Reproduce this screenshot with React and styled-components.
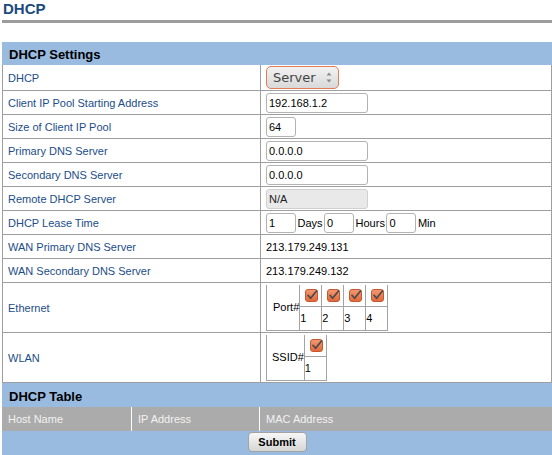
import React from 'react';
import styled, { createGlobalStyle } from 'styled-components';

const GlobalStyle = createGlobalStyle`
  html, body { margin: 0; padding: 0; background: #fff; }
  body {
    font-family: "Liberation Sans", Arial, sans-serif;
    font-size: 11px;
    color: #000;
  }
`;

const Page = styled.div`
  width: 550px;
  padding-left: 2px;
`;

const Title = styled.h1`
  margin: 0;
  font-size: 15px;
  line-height: 18px;
  font-weight: bold;
  color: #1b4a80;
  padding-bottom: 2px;
  border-bottom: 3px solid #9c9c9c;
  padding-left: 1px;
`;

const SectionHeader = styled.div`
  margin-top: ${(p) => p.$top || 0}px;
  height: ${(p) => p.$h || 23}px;
  box-sizing: border-box;
  padding: 2px 0 0 7px;
  display: flex;
  align-items: center;
  background: #9abbe0;
  font-size: 13px;
  font-weight: bold;
  color: #000;
`;

const SettingsTable = styled.table`
  width: 550px;
  border-collapse: collapse;
  table-layout: fixed;
  tr:first-child > td { border-top: none; }
`;

const Label = styled.td`
  width: 247px;
  height: ${(p) => p.$h || 23}px;
  padding: 0 5px;
  border: 1px solid #9f9f9f;
  color: #1c4d88;
  vertical-align: middle;
`;

const Value = styled.td`
  height: ${(p) => p.$h || 23}px;
  padding: 0 5px;
  border: 1px solid #9f9f9f;
  vertical-align: middle;
  white-space: nowrap;
`;

const TextInput = styled.input`
  box-sizing: border-box;
  width: ${(p) => p.$w || 102}px;
  height: 20px;
  margin: 0;
  padding: 0 2px;
  border: 1px solid #b3b3b3;
  border-radius: 3px;
  background: ${(p) => (p.disabled ? '#e9e9e9' : '#fff')};
  border-color: ${(p) => (p.disabled ? '#d0d0d0' : '#b3b3b3')};
  font-family: "Liberation Sans", Arial, sans-serif;
  font-size: 11px;
  color: #000;
  vertical-align: middle;
  outline: none;
  &:disabled { color: #222; }
`;

const SelectWrap = styled.span`
  position: relative;
  display: inline-block;
  vertical-align: middle;
`;

const Select = styled.select`
  appearance: none;
  -webkit-appearance: none;
  box-sizing: border-box;
  width: 73px;
  height: 23px;
  margin: 0;
  padding: 0 0 0 6px;
  border: 1px solid #e27c55;
  border-radius: 5px;
  background: linear-gradient(#f2f2f2, #d9d9d9);
  font-family: "DejaVu Sans", sans-serif;
  font-size: 13px;
  color: #444;
  outline: none;
`;

const Arrows = styled.svg`
  position: absolute;
  right: 7px;
  top: 6px;
  pointer-events: none;
`;

const LeaseRow = styled.div`
  display: flex;
  align-items: center;
  gap: 1.5px;
`;

const MiniTable = styled.table`
  border-collapse: collapse;
`;

const MiniCell = styled.td`
  border: 1px solid #a4a4a4;
  padding: 0;
`;

const NameCell = styled(MiniCell)`
  padding-left: ${(p) => p.$pad}px;
  text-align: left;
  vertical-align: middle;
  white-space: nowrap;
`;

const CheckCell = styled(MiniCell)`
  width: 21px;
  height: 21px;
  vertical-align: middle;
`;

const NumCell = styled(MiniCell)`
  height: 23px;
  vertical-align: middle;
  text-align: left;
`;

const CheckBox = styled.span`
  display: block;
  width: 13px;
  height: 13px;
  margin: 0 3px 0 5px;
`;

const Checked = () => (
  <CheckBox>
    <svg width="13" height="13" viewBox="0 0 13 13">
      <defs>
        <linearGradient id="cbg" x1="0" y1="0" x2="0" y2="1">
          <stop offset="0" stopColor="#f29a74" />
          <stop offset="1" stopColor="#e0673a" />
        </linearGradient>
      </defs>
      <rect x="0.5" y="0.5" width="12" height="12" rx="2.5" fill="url(#cbg)" stroke="#c5582f" />
      <path d="M3 6.3 L5.6 9.3 L11.5 2" fill="none" stroke="#4a4a4a" strokeWidth="1.7" strokeLinecap="round" strokeLinejoin="round" />
    </svg>
  </CheckBox>
);

const ListHead = styled.div`
  display: grid;
  grid-template-columns: 129px 128px 1fr;
  height: 24px;
  background: #ababab;
`;

const ListHeadCell = styled.div`
  display: flex;
  align-items: center;
  padding-left: 6px;
  color: #f2f2f2;
  font-size: 11px;
  border-left: ${(p) => (p.$first ? 'none' : '1px solid #fff')};
`;

const Footer = styled.div`
  height: 24px;
  background: #9abbe0;
  display: flex;
  justify-content: center;
  align-items: flex-start;
  padding-top: 1px;
  box-sizing: border-box;
`;

const SubmitButton = styled.button`
  box-sizing: border-box;
  width: 59px;
  height: 20px;
  margin: 0;
  padding: 0;
  border: 1px solid #a3a3a3;
  border-radius: 4px;
  background: linear-gradient(#f7f7f7, #d6d6d6);
  font-family: "Liberation Sans", Arial, sans-serif;
  font-size: 11px;
  font-weight: bold;
  color: #000;
`;

const rows = [
  ['Client IP Pool Starting Address', <TextInput key="a" defaultValue="192.168.1.2" />],
  ['Size of Client IP Pool', <TextInput key="b" $w={30} defaultValue="64" />],
  ['Primary DNS Server', <TextInput key="c" defaultValue="0.0.0.0" />],
  ['Secondary DNS Server', <TextInput key="d" defaultValue="0.0.0.0" />],
  ['Remote DHCP Server', <TextInput key="e" disabled defaultValue="N/A" />],
];

export default function App() {
  return (
    <>
      <GlobalStyle />
      <Page>
        <Title>DHCP</Title>
        <SectionHeader $top={19} $h={23}>DHCP Settings</SectionHeader>
        <SettingsTable>
          <tbody>
            <tr>
              <Label $h={25}>DHCP</Label>
              <Value $h={25}>
                <SelectWrap>
                  <Select defaultValue="Server">
                    <option>Server</option>
                    <option>Relay</option>
                    <option>Disabled</option>
                  </Select>
                  <Arrows width="6" height="11" viewBox="0 0 6 11">
                    <path d="M3 0.5 L5.5 3.5 L0.5 3.5 Z" fill="#8a8a8a" />
                    <path d="M3 10.5 L5.5 7.5 L0.5 7.5 Z" fill="#8a8a8a" />
                  </Arrows>
                </SelectWrap>
              </Value>
            </tr>
            {rows.map(([label, ctrl]) => (
              <tr key={label}>
                <Label>{label}</Label>
                <Value>{ctrl}</Value>
              </tr>
            ))}
            <tr>
              <Label>DHCP Lease Time</Label>
              <Value>
                <LeaseRow>
                  <TextInput $w={30} defaultValue="1" />
                  <span>Days</span>
                  <TextInput $w={30} defaultValue="0" />
                  <span>Hours</span>
                  <TextInput $w={30} defaultValue="0" />
                  <span>Min</span>
                </LeaseRow>
              </Value>
            </tr>
            <tr>
              <Label>WAN Primary DNS Server</Label>
              <Value>213.179.249.131</Value>
            </tr>
            <tr>
              <Label>WAN Secondary DNS Server</Label>
              <Value>213.179.249.132</Value>
            </tr>
            <tr>
              <Label $h={49}>Ethernet</Label>
              <Value $h={49}>
                <MiniTable>
                  <tbody>
                    <tr>
                      <NameCell rowSpan={2} $pad={6}>Port#</NameCell>
                      {[1, 2, 3, 4].map((n) => (
                        <CheckCell key={n}><Checked /></CheckCell>
                      ))}
                    </tr>
                    <tr>
                      {[1, 2, 3, 4].map((n) => (
                        <NumCell key={n}>{n}</NumCell>
                      ))}
                    </tr>
                  </tbody>
                </MiniTable>
              </Value>
            </tr>
            <tr>
              <Label $h={49}>WLAN</Label>
              <Value $h={49}>
                <MiniTable>
                  <tbody>
                    <tr>
                      <NameCell rowSpan={2} $pad={5}>SSID#</NameCell>
                      <CheckCell><Checked /></CheckCell>
                    </tr>
                    <tr>
                      <NumCell>1</NumCell>
                    </tr>
                  </tbody>
                </MiniTable>
              </Value>
            </tr>
          </tbody>
        </SettingsTable>
        <SectionHeader $h={24}>DHCP Table</SectionHeader>
        <ListHead>
          <ListHeadCell $first>Host Name</ListHeadCell>
          <ListHeadCell>IP Address</ListHeadCell>
          <ListHeadCell>MAC Address</ListHeadCell>
        </ListHead>
        <Footer>
          <SubmitButton type="button">Submit</SubmitButton>
        </Footer>
      </Page>
    </>
  );
}
